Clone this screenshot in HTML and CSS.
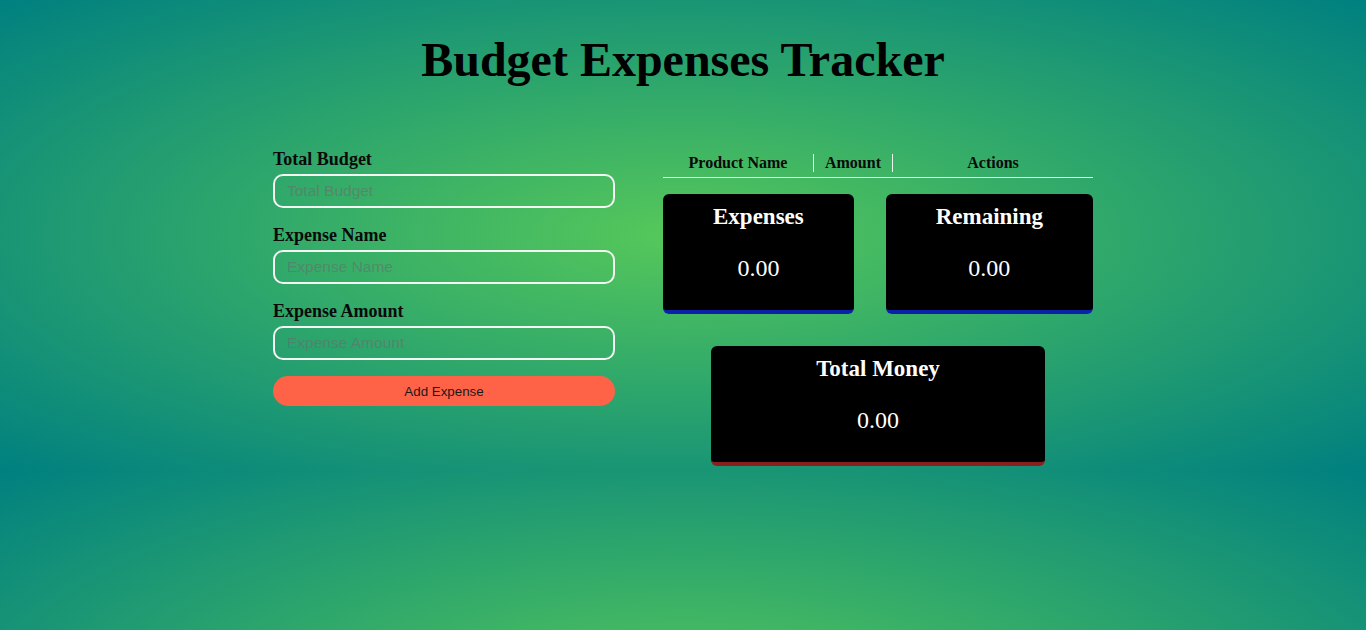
FILE: index.html
```html
<!DOCTYPE html>
<html lang="en">
<head>
<meta charset="utf-8">
<title>Budget Expenses Tracker</title>
<link rel="stylesheet" href="styles.css">
</head>
<body>
  <h1 class="title">Budget Expenses Tracker</h1>
  <main class="layout">
    <section class="form">
      <div class="field">
        <label class="label" for="budget">Total Budget</label>
        <input class="input" id="budget" type="text" placeholder="Total Budget">
      </div>
      <div class="field">
        <label class="label" for="name">Expense Name</label>
        <input class="input" id="name" type="text" placeholder="Expense Name">
      </div>
      <div class="field">
        <label class="label" for="amount">Expense Amount</label>
        <input class="input" id="amount" type="text" placeholder="Expense Amount">
      </div>
      <button class="add-btn" type="button">Add Expense</button>
    </section>
    <section class="summary">
      <div class="table-head">
        <div class="th">Product Name</div>
        <div class="th sep">Amount</div>
        <div class="th sep">Actions</div>
      </div>
      <div class="cards">
        <div class="card card-blue">
          <div class="card-title">Expenses</div>
          <div class="card-value">0.00</div>
        </div>
        <div class="card card-blue">
          <div class="card-title">Remaining</div>
          <div class="card-value">0.00</div>
        </div>
      </div>
      <div class="card card-red card-total">
        <div class="card-title">Total Money</div>
        <div class="card-value">0.00</div>
      </div>
    </section>
  </main>
</body>
</html>
```
FILE: styles.css
```css
html {
  min-height: 100%;
  background-color: #0f8a78;
  background-image: radial-gradient(ellipse farthest-corner at 50% 50%, #56c85a 0%, #008080 100%);
  background-size: 100% 470px;
  background-repeat: repeat;
}

body {
  margin: 0;
  font-family: "Liberation Serif", "Times New Roman", serif;
  color: #000;
}

.title {
  margin: 32px 0 0;
  font-size: 48px;
  font-weight: bold;
  line-height: normal;
  text-align: center;
}

.layout {
  width: 820px;
  margin: 62px auto 0;
  display: flex;
  gap: 48px;
  align-items: flex-start;
}

.form {
  width: 342px;
  display: flex;
  flex-direction: column;
}

.field {
  display: flex;
  flex-direction: column;
  margin-bottom: 17px;
}

.label {
  font-size: 18px;
  font-weight: bold;
  line-height: normal;
  margin-bottom: 4px;
  color: #0a0a0a;
}

.input {
  box-sizing: border-box;
  height: 34px;
  width: 100%;
  border: 2px solid #f4f4f4;
  border-radius: 10px;
  background: transparent;
  padding: 0 12px;
  font-family: "Liberation Sans", Arial, sans-serif;
  font-size: 15.5px;
  color: #000;
  outline: none;
}

.input::placeholder {
  color: rgba(105, 110, 108, 0.6);
}

.add-btn {
  margin-top: -1px;
  height: 30px;
  border: none;
  border-radius: 15px;
  background: #ff6347;
  color: #1a1a1a;
  font-family: "Liberation Sans", Arial, sans-serif;
  font-size: 13.33px;
  cursor: pointer;
}

.summary {
  width: 430px;
  padding-top: 5px;
  display: flex;
  flex-direction: column;
}

.table-head {
  display: grid;
  grid-template-columns: 150px 79px 1fr;
  padding-bottom: 5px;
  border-bottom: 1px solid #e8f4ec;
}

.th {
  font-size: 16px;
  font-weight: bold;
  line-height: normal;
  text-align: center;
  color: #0a0a0a;
}

.sep {
  border-left: 1px solid #e8f4ec;
}

.cards {
  margin-top: 16px;
  display: flex;
  justify-content: space-between;
}

.card {
  box-sizing: border-box;
  background: #000;
  color: #fff;
  border-radius: 6px;
  padding: 10px 50px 28px;
  text-align: center;
}

.card-blue {
  border-bottom: 4px solid #0b22a8;
}

.card-red {
  border-bottom: 4px solid #8a1f1f;
}

.card-total {
  width: 334px;
  margin: 32px auto 0;
}

.card-title {
  font-size: 23px;
  font-weight: bold;
  line-height: normal;
}

.card-value {
  margin-top: 25px;
  font-size: 24px;
  line-height: normal;
}
```
